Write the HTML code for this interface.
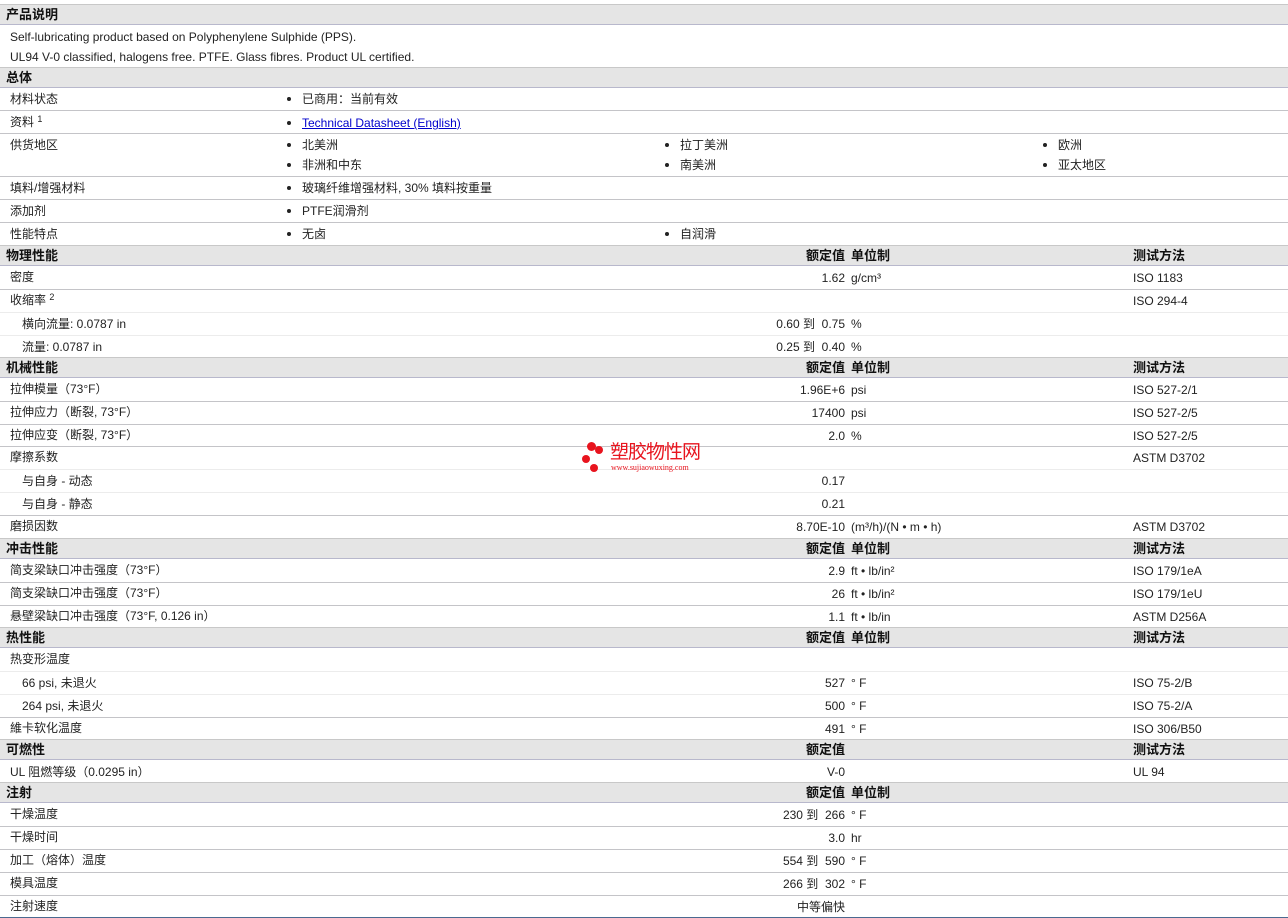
<!DOCTYPE html>
<html><head><meta charset="utf-8"><style>
*{margin:0;padding:0;box-sizing:border-box}
body{width:1288px;height:918px;background:#fff;position:relative;overflow:hidden;font-family:"Liberation Sans","Noto Sans CJK SC",sans-serif;font-size:12px;color:#222}
.r{position:absolute;left:0;width:1288px;border-bottom:1px solid #c4c4c8}
.r.s{border-bottom-color:#ececec}
.h{position:absolute;left:0;width:1288px;height:21px;background:#e5e5e5;border-top:1px solid #c8c8c8;border-bottom:1px solid #b8b8cc;font-weight:bold;font-size:13px;color:#111}
.h span,.r span{position:absolute;white-space:nowrap;line-height:14px;height:14px}
.h span{top:3px}
.r span{top:4px}
.a{left:6px}.l{left:10px}.i{left:22px}
.v{right:443px;text-align:right}.u{left:851px}.t{left:1133px}
.b1{left:302px}.b2{left:680px}.b3{left:1058px}
.d{position:absolute;width:4px;height:4px;border-radius:50%;background:#222}
sup{font-size:9px;vertical-align:4px;line-height:0}
a{color:#00c;text-decoration:underline}
.wm{position:absolute;left:580px;top:440px;width:140px;height:36px}
.dot{position:absolute;border-radius:50%;background:#e8141e}
</style></head><body>

<div class="h" style="top:4px"><span class="a">产品说明</span></div>
<div class="r" style="top:25px;height:42px;border:none"><span class="l" style="top:5px">Self-lubricating product based on Polyphenylene Sulphide (PPS).</span><span class="l" style="top:25px">UL94 V-0 classified, halogens free. PTFE. Glass fibres. Product UL certified.</span></div>
<div class="h" style="top:67px"><span class="a">总体</span></div>
<div class="r" style="top:88px;height:23px"><span class="l">材料状态</span><i class="d" style="left:287px;top:9px"></i><span class="b1">已商用：当前有效</span></div>
<div class="r" style="top:111px;height:23px"><span class="l">资料 <sup>1</sup></span><i class="d" style="left:287px;top:10px"></i><span class="b1" style="top:5px"><a>Technical Datasheet (English)</a></span></div>
<div class="r" style="top:134px;height:43px"><span class="l">供货地区</span>
<i class="d" style="left:287px;top:9px"></i><span class="b1">北美洲</span>
<i class="d" style="left:665px;top:9px"></i><span class="b2">拉丁美洲</span>
<i class="d" style="left:1043px;top:9px"></i><span class="b3">欧洲</span>
<i class="d" style="left:287px;top:29px"></i><span class="b1" style="top:24px">非洲和中东</span>
<i class="d" style="left:665px;top:29px"></i><span class="b2" style="top:24px">南美洲</span>
<i class="d" style="left:1043px;top:29px"></i><span class="b3" style="top:24px">亚太地区</span></div>
<div class="r" style="top:177px;height:23px"><span class="l">填料/增强材料</span><i class="d" style="left:287px;top:9px"></i><span class="b1">玻璃纤维增强材料, 30% 填料按重量</span></div>
<div class="r" style="top:200px;height:23px"><span class="l">添加剂</span><i class="d" style="left:287px;top:9px"></i><span class="b1">PTFE润滑剂</span></div>
<div class="r" style="top:223px;height:23px;border:none"><span class="l">性能特点</span><i class="d" style="left:287px;top:9px"></i><span class="b1">无卤</span><i class="d" style="left:665px;top:9px"></i><span class="b2">自润滑</span></div>

<div class="h" style="top:245px"><span class="a">物理性能</span><span class="v">额定值</span><span class="u">单位制</span><span class="t">测试方法</span></div>
<div class="r" style="top:267px;height:23px"><span class="l" style="top:3px">密度</span><span class="v">1.62</span><span class="u">g/cm³</span><span class="t">ISO 1183</span></div>
<div class="r s" style="top:290px;height:23px"><span class="l" style="top:3px">收缩率 <sup>2</sup></span><span class="t">ISO 294-4</span></div>
<div class="r s" style="top:313px;height:23px"><span class="i">横向流量: 0.0787 in</span><span class="v">0.60 到&nbsp; 0.75</span><span class="u">%</span></div>
<div class="r" style="top:336px;height:21px;border:none"><span class="i">流量: 0.0787 in</span><span class="v">0.25 到&nbsp; 0.40</span><span class="u">%</span></div>

<div class="h" style="top:357px"><span class="a">机械性能</span><span class="v">额定值</span><span class="u">单位制</span><span class="t">测试方法</span></div>
<div class="r" style="top:379px;height:23px"><span class="l" style="top:3px">拉伸模量（73°F）</span><span class="v">1.96E+6</span><span class="u">psi</span><span class="t">ISO 527-2/1</span></div>
<div class="r" style="top:402px;height:23px"><span class="l" style="top:3px">拉伸应力（断裂, 73°F）</span><span class="v">17400</span><span class="u">psi</span><span class="t">ISO 527-2/5</span></div>
<div class="r" style="top:425px;height:22px"><span class="l" style="top:3px">拉伸应变（断裂, 73°F）</span><span class="v">2.0</span><span class="u">%</span><span class="t">ISO 527-2/5</span></div>
<div class="r s" style="top:447px;height:23px"><span class="l" style="top:3px">摩擦系数</span><span class="t">ASTM D3702</span></div>
<div class="r s" style="top:470px;height:23px"><span class="i">与自身 - 动态</span><span class="v">0.17</span></div>
<div class="r" style="top:493px;height:23px"><span class="i">与自身 - 静态</span><span class="v">0.21</span></div>
<div class="r" style="top:516px;height:22px;border:none"><span class="l" style="top:3px">磨损因数</span><span class="v">8.70E-10</span><span class="u">(m³/h)/(N • m • h)</span><span class="t">ASTM D3702</span></div>

<div class="h" style="top:538px"><span class="a">冲击性能</span><span class="v">额定值</span><span class="u">单位制</span><span class="t">测试方法</span></div>
<div class="r" style="top:560px;height:23px"><span class="l" style="top:3px">简支梁缺口冲击强度（73°F）</span><span class="v">2.9</span><span class="u">ft • lb/in²</span><span class="t">ISO 179/1eA</span></div>
<div class="r" style="top:583px;height:23px"><span class="l" style="top:3px">简支梁缺口冲击强度（73°F）</span><span class="v">26</span><span class="u">ft • lb/in²</span><span class="t">ISO 179/1eU</span></div>
<div class="r" style="top:606px;height:21px;border:none"><span class="l" style="top:3px">悬壁梁缺口冲击强度（73°F, 0.126 in）</span><span class="v">1.1</span><span class="u">ft • lb/in</span><span class="t">ASTM D256A</span></div>

<div class="h" style="top:627px"><span class="a">热性能</span><span class="v">额定值</span><span class="u">单位制</span><span class="t">测试方法</span></div>
<div class="r s" style="top:649px;height:23px"><span class="l" style="top:3px">热变形温度</span></div>
<div class="r s" style="top:672px;height:23px"><span class="i">66 psi, 未退火</span><span class="v">527</span><span class="u">° F</span><span class="t">ISO 75-2/B</span></div>
<div class="r" style="top:695px;height:23px"><span class="i">264 psi, 未退火</span><span class="v">500</span><span class="u">° F</span><span class="t">ISO 75-2/A</span></div>
<div class="r" style="top:718px;height:21px;border:none"><span class="l" style="top:3px">維卡软化温度</span><span class="v">491</span><span class="u">° F</span><span class="t">ISO 306/B50</span></div>

<div class="h" style="top:739px"><span class="a">可燃性</span><span class="v">额定值</span><span class="t">测试方法</span></div>
<div class="r" style="top:761px;height:21px;border:none"><span class="l" style="top:4px">UL 阻燃等级（0.0295 in）</span><span class="v">V-0</span><span class="t">UL 94</span></div>

<div class="h" style="top:782px"><span class="a">注射</span><span class="v">额定值</span><span class="u">单位制</span></div>
<div class="r" style="top:804px;height:23px"><span class="l" style="top:3px">干燥温度</span><span class="v">230 到&nbsp; 266</span><span class="u">° F</span></div>
<div class="r" style="top:827px;height:23px"><span class="l" style="top:3px">干燥时间</span><span class="v">3.0</span><span class="u">hr</span></div>
<div class="r" style="top:850px;height:23px"><span class="l" style="top:3px">加工（熔体）温度</span><span class="v">554 到&nbsp; 590</span><span class="u">° F</span></div>
<div class="r" style="top:873px;height:23px"><span class="l" style="top:3px">模具温度</span><span class="v">266 到&nbsp; 302</span><span class="u">° F</span></div>
<div class="r" style="top:896px;height:22px;border-bottom-color:#4a6a90"><span class="l" style="top:3px">注射速度</span><span class="v">中等偏快</span></div>

<div class="wm">
<i class="dot" style="left:7px;top:2px;width:9px;height:9px"></i>
<i class="dot" style="left:15px;top:6px;width:8px;height:8px"></i>
<i class="dot" style="left:2px;top:15px;width:8px;height:8px"></i>
<i class="dot" style="left:10px;top:24px;width:8px;height:8px"></i>
<span style="position:absolute;left:30px;top:1px;font-size:19px;color:#e8141e;font-family:'Noto Sans CJK SC',sans-serif;line-height:20px;letter-spacing:-1px">塑胶物性网</span>
<span style="position:absolute;left:31px;top:23px;font-size:8px;color:#e8141e;font-family:'Liberation Serif',serif">www.sujiaowuxing.com</span>
</div>
</body></html>
